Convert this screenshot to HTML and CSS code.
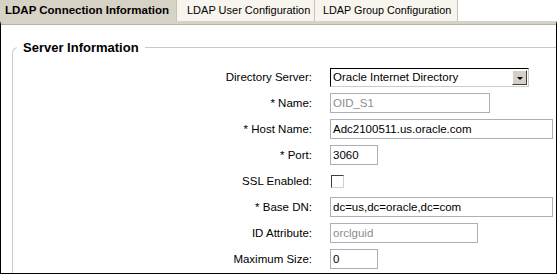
FILE: index.html
```html
<!DOCTYPE html>
<html lang="en">
<head>
    <meta charset="UTF-8">
    <title>LDAP Connection Information</title>
    <link rel="stylesheet" href="styles.css">
</head>
<body>
    <div class="tabs">
        <div class="tab active">LDAP Connection Information</div>
        <div class="tab tab-user">LDAP User Configuration</div>
        <div class="tab tab-group">LDAP Group Configuration</div>
    </div>

    <div class="panel">
        <fieldset class="section">
            <legend>Server Information</legend>

            <div class="form">
                <label>Directory Server:</label>
                <div class="select">
                    <span>Oracle Internet Directory</span>
                    <span class="arrow"></span>
                </div>

                <label>* Name:</label>
                <div class="field disabled w-name">OID_S1</div>

                <label>* Host Name:</label>
                <div class="field w-long">Adc2100511.us.oracle.com</div>

                <label>* Port:</label>
                <div class="field w-short">3060</div>

                <label>SSL Enabled:</label>
                <div><span class="check"></span></div>

                <label>* Base DN:</label>
                <div class="field w-long">dc=us,dc=oracle,dc=com</div>

                <label>ID Attribute:</label>
                <div class="field disabled w-id">orclguid</div>

                <label>Maximum Size:</label>
                <div class="field w-short">0</div>
            </div>
        </fieldset>
    </div>
</body>
</html>
```

FILE: styles.css
```css
body {
    margin: 0;
    background: #fff;
    font-family: "Liberation Sans", Arial, sans-serif;
    font-size: 11px;
    color: #000;
    width: 557px;
    height: 274px;
    display: flex;
    flex-direction: column;
}

/* Tabs */
.tabs {
    display: flex;
    height: 21px;
}

.tab {
    box-sizing: border-box;
    padding-left: 10px;
    line-height: 21px;
    background: #f8f4ee;
    border-right: 1px solid #c9c2b4;
    font-size: 11px;
    white-space: nowrap;
}

.tab-user {
    width: 139px;
    border-left: 1px solid #c9c2b4;
}

.tab-group {
    width: 143px;
    padding-left: 8px;
    font-size: 10.8px;
}

.tab.active {
    background: #d6d2c6;
    font-weight: bold;
    font-size: 11.5px;
    border: none;
    padding-left: 5px;
    width: 176px;
}

/* Panel */
.panel {
    flex: 1;
    border: 1px solid #000;
    border-top: 3px solid #d6d2c6;
    box-shadow: inset 0 1px 0 #b8b2a4;
    padding-left: 11px;
    overflow: hidden;
}

.section {
    margin: 16px 0 0 0;
    padding: 0;
    border: 1px solid #c4cad0;
    border-right: none;
    border-bottom: none;
    border-top-left-radius: 6px;
    height: 260px;
}

.section legend {
    margin-left: 4px;
    padding: 0 6px;
    font-size: 13px;
    font-weight: bold;
}

/* Form */
.form {
    display: grid;
    grid-template-columns: 299px auto;
    column-gap: 18px;
    row-gap: 6px;
    grid-auto-rows: 20px;
    align-items: center;
    padding-top: 12px;
}

.form label {
    text-align: right;
    font-size: 11.5px;
}

.field {
    height: 18px;
    line-height: 18px;
    border: 1px solid #a9b0b6;
    padding: 0 2px;
    font-size: 11.5px;
    box-sizing: content-box;
}

.field.disabled {
    color: #8c8c8c;
}

.w-name { width: 154px; }
.w-long { width: 217px; }
.w-short { width: 42px; }
.w-id { width: 142px; }

.select {
    width: 195px;
    height: 17px;
    border: 1px solid #000;
    border-right-color: #ccc;
    border-bottom-color: #ccc;
    display: flex;
    align-items: center;
    justify-content: space-between;
    padding-left: 2px;
    font-size: 11.5px;
}

.select .arrow {
    width: 13px;
    height: 13px;
    margin-right: 1px;
    background: #d4d0c8;
    border: 1px solid;
    border-color: #fff #404040 #404040 #fff;
    position: relative;
}

.select .arrow::after {
    content: "";
    position: absolute;
    left: 4px;
    top: 6px;
    border-left: 3px solid transparent;
    border-right: 3px solid transparent;
    border-top: 3px solid #000;
}

.check {
    display: block;
    width: 11px;
    height: 11px;
    margin-left: 1px;
    border: 1px solid;
    border-color: #404040 #d4d0c8 #d4d0c8 #404040;
}
```
